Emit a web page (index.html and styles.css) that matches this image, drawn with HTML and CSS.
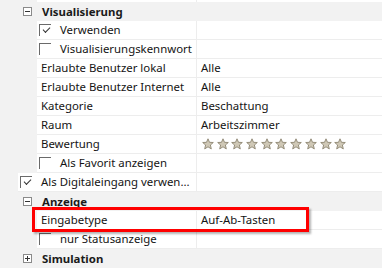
FILE: index.html
```html
<!DOCTYPE html>
<html>
<head>
<meta charset="utf-8">
<link rel="stylesheet" href="styles.css">
</head>
<body>
<div class="grid">
  <div class="row top"><div class="name"></div><div class="val"></div></div>
  <div class="row head"><span class="tog minus"></span><span class="htext">Visualisierung</span></div>
  <div class="row"><div class="name"><span class="cb checked"></span>Verwenden</div><div class="val"></div></div>
  <div class="row"><div class="name"><span class="cb"></span>Visualisierungskennwort</div><div class="val"></div></div>
  <div class="row"><div class="name">Erlaubte Benutzer lokal</div><div class="val">Alle</div></div>
  <div class="row"><div class="name">Erlaubte Benutzer Internet</div><div class="val">Alle</div></div>
  <div class="row"><div class="name">Kategorie</div><div class="val">Beschattung</div></div>
  <div class="row"><div class="name">Raum</div><div class="val">Arbeitszimmer</div></div>
  <div class="row"><div class="name">Bewertung</div><div class="val stars">
    <svg class="star" viewBox="0 0 12 12"><polygon points="6,0.8 7.5,4.3 11.3,4.5 8.4,7 9.3,10.9 6,8.8 2.7,10.9 3.6,7 0.7,4.5 4.5,4.3"/></svg>
    <svg class="star" viewBox="0 0 12 12"><polygon points="6,0.8 7.5,4.3 11.3,4.5 8.4,7 9.3,10.9 6,8.8 2.7,10.9 3.6,7 0.7,4.5 4.5,4.3"/></svg>
    <svg class="star" viewBox="0 0 12 12"><polygon points="6,0.8 7.5,4.3 11.3,4.5 8.4,7 9.3,10.9 6,8.8 2.7,10.9 3.6,7 0.7,4.5 4.5,4.3"/></svg>
    <svg class="star" viewBox="0 0 12 12"><polygon points="6,0.8 7.5,4.3 11.3,4.5 8.4,7 9.3,10.9 6,8.8 2.7,10.9 3.6,7 0.7,4.5 4.5,4.3"/></svg>
    <svg class="star" viewBox="0 0 12 12"><polygon points="6,0.8 7.5,4.3 11.3,4.5 8.4,7 9.3,10.9 6,8.8 2.7,10.9 3.6,7 0.7,4.5 4.5,4.3"/></svg>
    <svg class="star" viewBox="0 0 12 12"><polygon points="6,0.8 7.5,4.3 11.3,4.5 8.4,7 9.3,10.9 6,8.8 2.7,10.9 3.6,7 0.7,4.5 4.5,4.3"/></svg>
    <svg class="star" viewBox="0 0 12 12"><polygon points="6,0.8 7.5,4.3 11.3,4.5 8.4,7 9.3,10.9 6,8.8 2.7,10.9 3.6,7 0.7,4.5 4.5,4.3"/></svg>
    <svg class="star" viewBox="0 0 12 12"><polygon points="6,0.8 7.5,4.3 11.3,4.5 8.4,7 9.3,10.9 6,8.8 2.7,10.9 3.6,7 0.7,4.5 4.5,4.3"/></svg>
    <svg class="star" viewBox="0 0 12 12"><polygon points="6,0.8 7.5,4.3 11.3,4.5 8.4,7 9.3,10.9 6,8.8 2.7,10.9 3.6,7 0.7,4.5 4.5,4.3"/></svg>
    <svg class="star" viewBox="0 0 12 12"><polygon points="6,0.8 7.5,4.3 11.3,4.5 8.4,7 9.3,10.9 6,8.8 2.7,10.9 3.6,7 0.7,4.5 4.5,4.3"/></svg>
  </div></div>
  <div class="row"><div class="name"><span class="cb"></span>Als Favorit anzeigen</div><div class="val"></div></div>
  <div class="row outdent"><div class="name"><span class="cb checked"></span>Als Digitaleingang verwen...</div><div class="val"></div></div>
  <div class="row head"><span class="tog minus"></span><span class="htext">Anzeige</span></div>
  <div class="row"><div class="name">Eingabetype</div><div class="val">Auf-Ab-Tasten</div></div>
  <div class="row"><div class="name"><span class="cb"></span>nur Statusanzeige</div><div class="val"></div></div>
  <div class="row head"><span class="tog plus"></span><span class="htext">Simulation</span></div>
  <div class="highlight"></div>
</div>
</body>
</html>
```
FILE: styles.css
```css
html, body {
  margin: 0;
  padding: 0;
  background: #f2f2f2;
}
body {
  width: 382px;
  height: 268px;
  overflow: hidden;
  font-family: "Noto Sans", "DejaVu Sans", sans-serif;
  font-size: 11.4px;
  color: #141414;
}
.grid {
  position: relative;
  display: flex;
  flex-direction: column;
}
.row {
  display: flex;
  height: 19px;
  box-sizing: border-box;
  margin-left: 37px;
  background: #fff;
  border-bottom: 1px solid #ededed;
  line-height: 18px;
}
.row.top {
  height: 2px;
  border-bottom: none;
}
.row.outdent {
  margin-left: 18px;
}
.row.outdent .name {
  width: 174px;
}
.name {
  width: 155px;
  flex: none;
  padding-left: 4px;
  display: flex;
  align-items: center;
  white-space: nowrap;
  overflow: hidden;
}
.val {
  flex: 1;
  border-left: 1px solid #ededed;
  padding-left: 4px;
  display: flex;
  align-items: center;
  white-space: nowrap;
}
.row.head {
  margin-left: 0;
  background: #f2f2f2;
  border-bottom: none;
  align-items: center;
}
.tog {
  width: 9px;
  height: 9px;
  box-sizing: border-box;
  border: 1px solid #8a8a8a;
  margin-left: 23px;
  margin-right: 10px;
  position: relative;
  background: #fff;
}
.tog::before {
  content: "";
  position: absolute;
  left: 1px;
  top: 3px;
  width: 5px;
  height: 1px;
  background: #333;
}
.tog.plus::after {
  content: "";
  position: absolute;
  left: 3px;
  top: 1px;
  width: 1px;
  height: 5px;
  background: #333;
}
.htext {
  font-weight: bold;
  color: #1a1a1a;
}
.cb {
  width: 12px;
  height: 12px;
  box-sizing: border-box;
  border-top: 1px solid #6a6a6a;
  border-left: 1px solid #6a6a6a;
  margin-left: -2px;
  margin-right: 9px;
  flex: none;
  position: relative;
}
.cb.checked::after {
  content: "";
  position: absolute;
  left: 3px;
  top: 2px;
  width: 6px;
  height: 3px;
  border-left: 1px solid #333;
  border-bottom: 1px solid #333;
  transform: rotate(-45deg);
}
.stars {
  gap: 2.7px;
  padding-left: 5px;
}
.star {
  width: 12px;
  height: 12px;
  flex: none;
}
.star polygon {
  fill: #cfc8b6;
  stroke: #8c8470;
  stroke-width: 0.9;
  stroke-linejoin: round;
}
.highlight {
  position: absolute;
  left: 32px;
  top: 207px;
  width: 277px;
  height: 25px;
  box-sizing: border-box;
  border: 3px solid #f00;
  box-shadow: 2px 2px 2px rgba(0, 0, 0, 0.3);
}
```
